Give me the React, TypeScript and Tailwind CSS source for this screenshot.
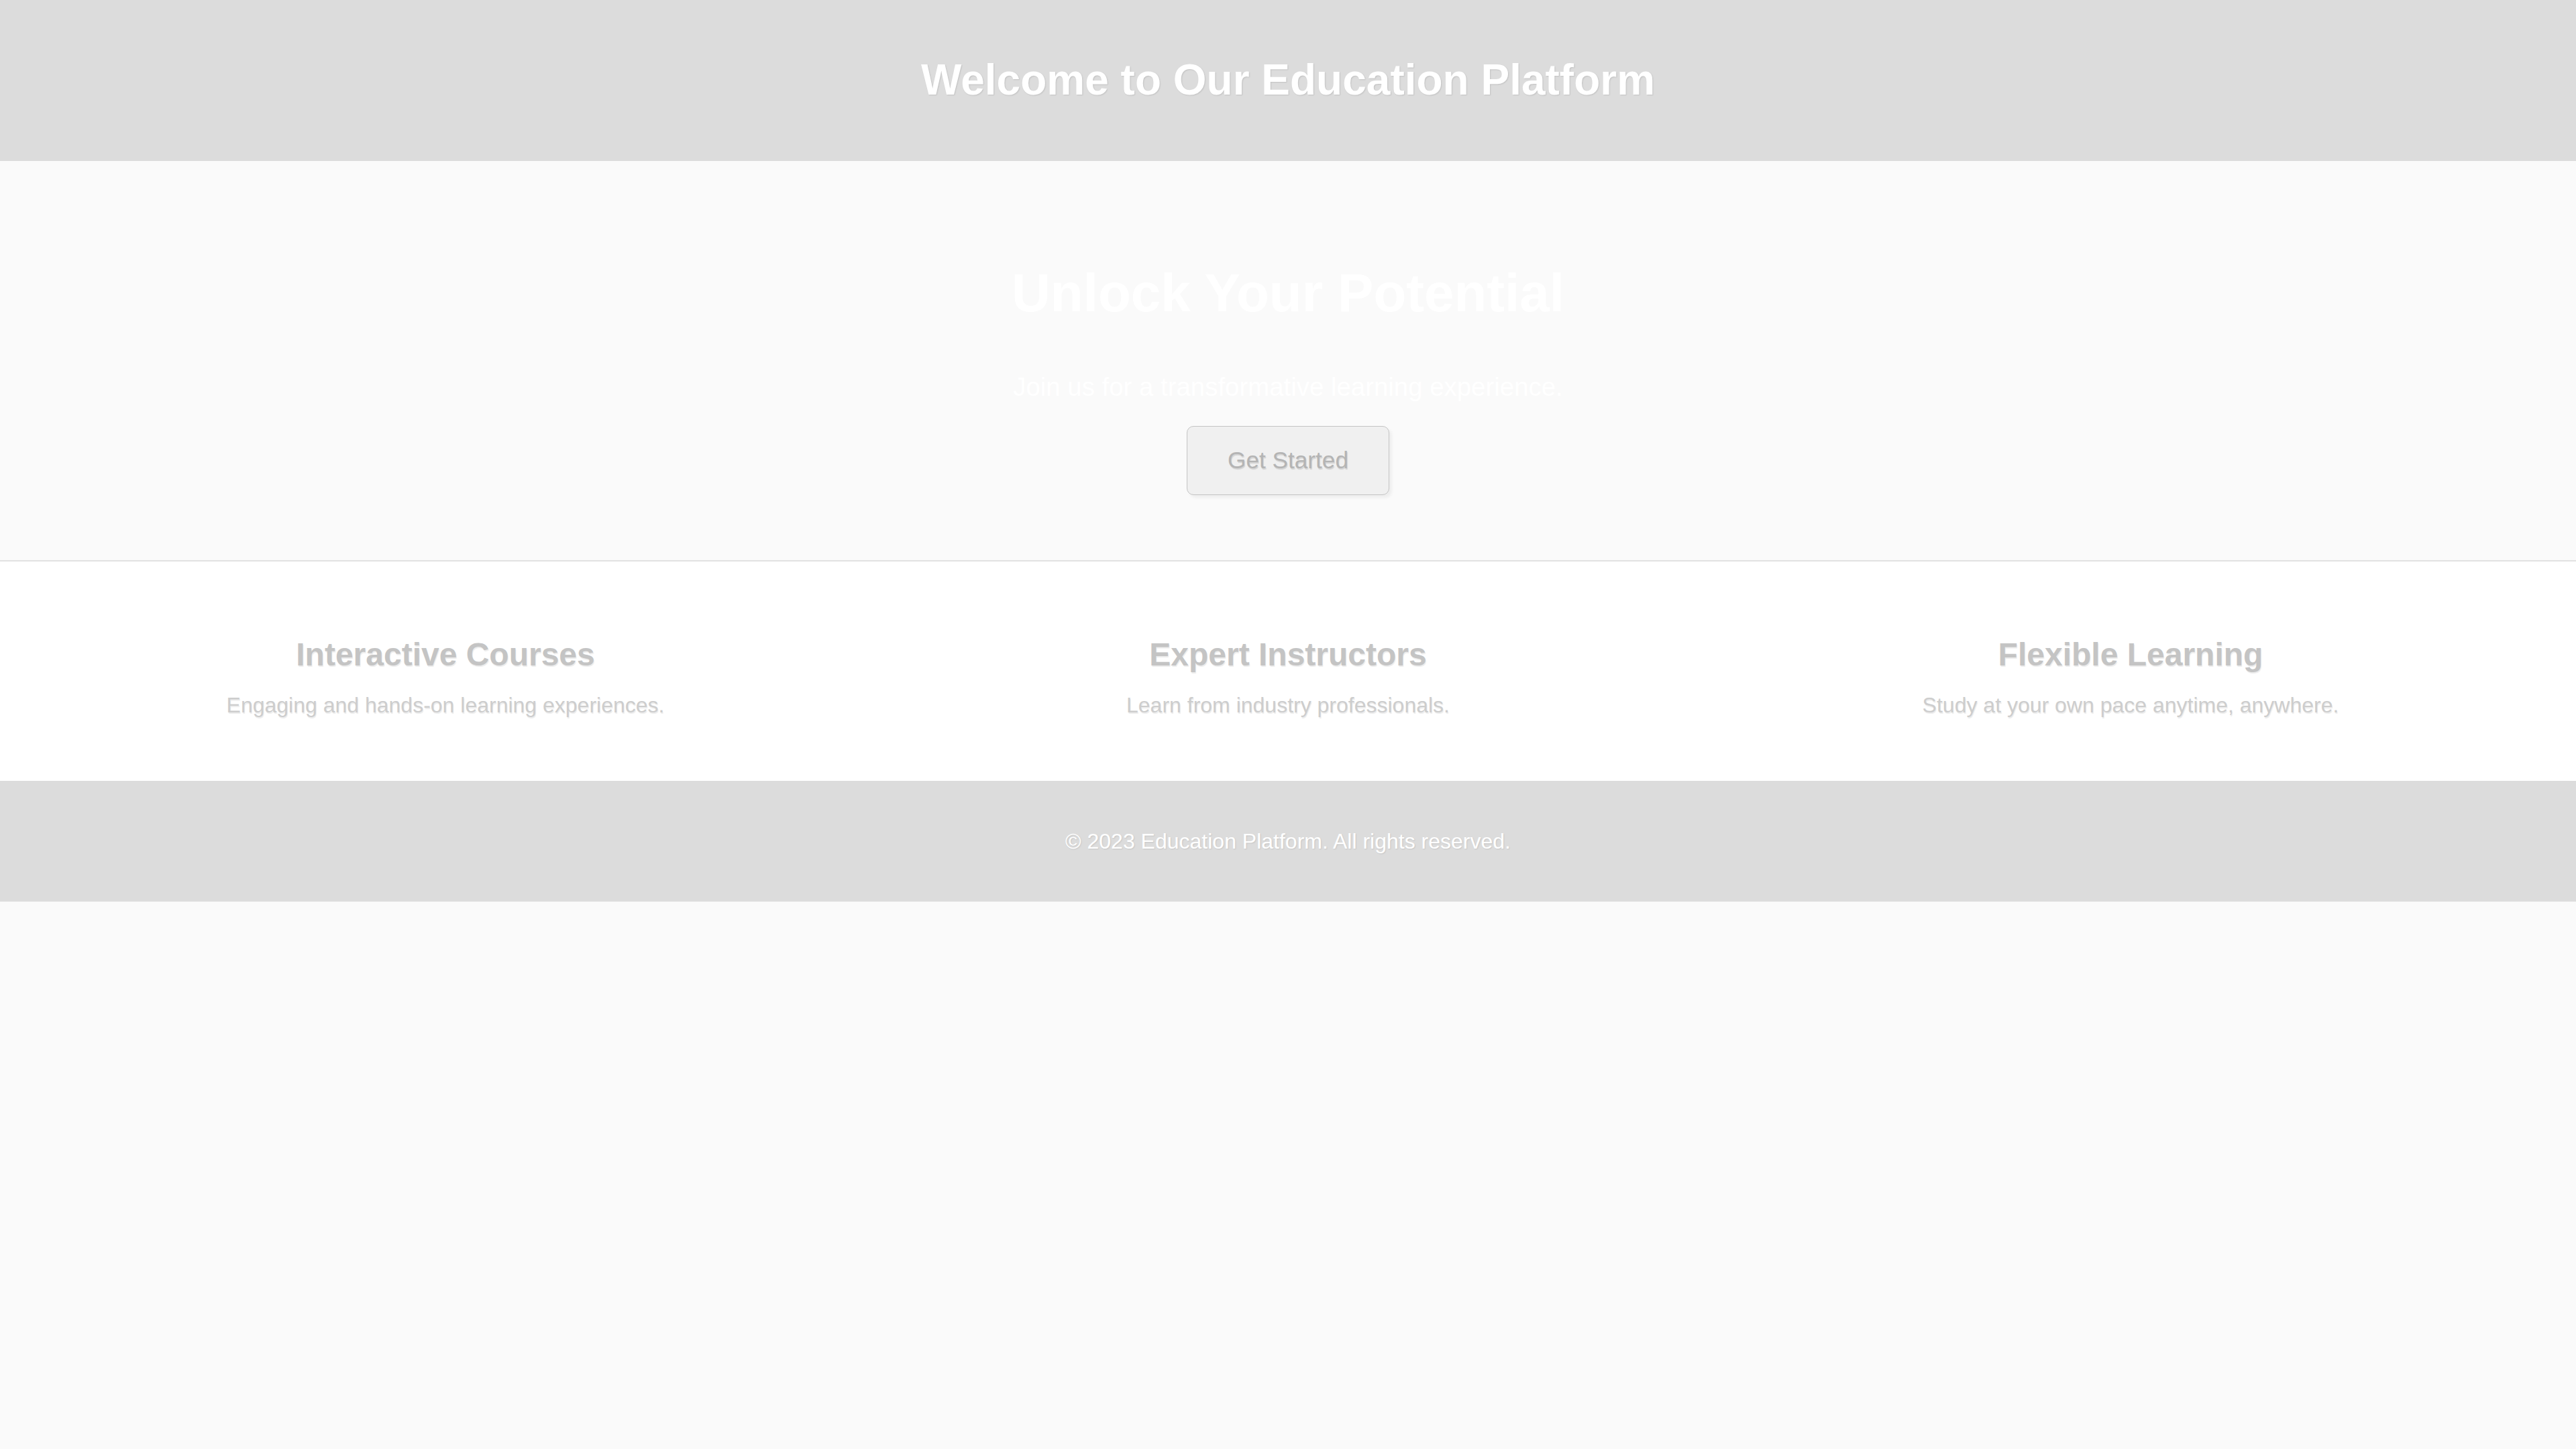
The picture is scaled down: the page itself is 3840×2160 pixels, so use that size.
import * as React from "react";

type Feature = {
  title: string;
  text: string;
};

const features: Feature[] = [
  { title: "Interactive Courses", text: "Engaging and hands-on learning experiences." },
  { title: "Expert Instructors", text: "Learn from industry professionals." },
  { title: "Flexible Learning", text: "Study at your own pace anytime, anywhere." },
];

export default function App() {
  return (
    <div className="min-h-screen bg-[#fafafa] font-['Liberation_Sans',Arial,sans-serif]">
      <header className="flex h-[240px] items-center justify-center bg-[#dcdcdc]">
        <h1 className="text-[64px] leading-[1.15] font-bold text-white [text-shadow:1px_1px_2px_rgba(0,0,0,0.12)]">
          Welcome to Our Education Platform
        </h1>
      </header>

      <section className="flex h-[597px] flex-col items-center border-b-2 border-[#e2e2e2] bg-[#fafafa] pt-[151px] shadow-[0_3px_3px_rgba(0,0,0,0.02)]">
        <h2 className="text-[80px] leading-[1.15] font-bold text-white">Unlock Your Potential</h2>
        <p className="mt-[72px] text-[38.4px] leading-[1.15] text-white">
          Join us for a transformative learning experience.
        </p>
        <button className="mt-[36px] rounded-[10px] border border-[#c4c4c4] bg-[#f0f0f0] px-[60px] py-[30px] text-[35.2px] leading-[1.15] text-[#b4b4b4] shadow-[4px_4px_4px_rgba(0,0,0,0.05)] [text-shadow:1px_2px_1px_rgba(0,0,0,0.12)]">
          Get Started
        </button>
      </section>

      <section className="grid grid-cols-3 gap-x-[72px] bg-white px-[72px] pt-[111px] pb-[94px]">
        {features.map((feature, index) => (
          <div className="flex flex-col items-center text-center" key={index}>
            <h3 className="text-[48px] leading-[1.15] font-bold text-[#c4c4c4] [text-shadow:1px_2px_1px_rgba(0,0,0,0.08)]">
              {feature.title}
            </h3>
            <p className="mt-[30px] text-[32px] leading-[1.15] text-[#cdcdcd] [text-shadow:1px_2px_1px_rgba(0,0,0,0.08)]">
              {feature.text}
            </p>
          </div>
        ))}
      </section>

      <footer className="flex h-[180px] items-center justify-center bg-[#dcdcdc]">
        <p className="text-[32px] leading-[1.15] text-white [text-shadow:1px_1px_2px_rgba(0,0,0,0.1)]">
          © 2023 Education Platform. All rights reserved.
        </p>
      </footer>
    </div>
  );
}
